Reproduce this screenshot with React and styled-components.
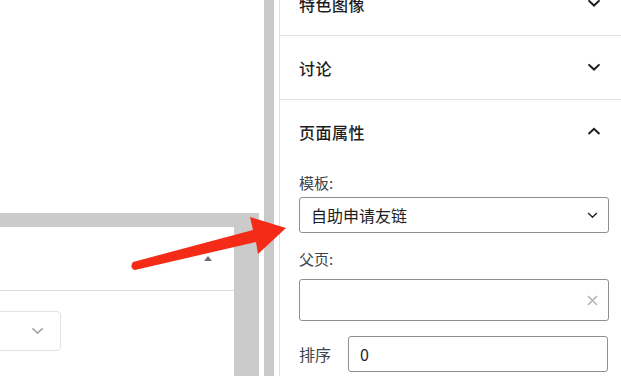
import React from 'react'
import styled, { createGlobalStyle } from 'styled-components'

const Global = createGlobalStyle`
  html, body { margin: 0; padding: 0; background: #fff; }
  body { font-family: "Noto Sans CJK SC", "Noto Sans", sans-serif; }
`;

const Page = styled.div`
  position: relative;
  display: flex;
  width: 621px;
  height: 376px;
  overflow: hidden;
  background: #fff;
`;

// left: the editor area, half covered by grey frame bands
const Editor = styled.div`
  width: 259px;
  display: flex;
  flex-direction: column;
`;
const Canvas = styled.div`
  height: 213px;
  background: #fff;
`;
const Band = styled.div`
  height: 14px;
  background: #cbcbcb;
`;
const LowerRow = styled.div`
  flex: 1;
  display: flex;
`;
const Meta = styled.div`
  width: 234px;
  background: #fff;
`;
const MetaHead = styled.div`
  height: 63px;
  border-bottom: 1px solid #dedede;
  display: flex;
  align-items: center;
  justify-content: flex-end;
  padding-right: 22px;
`;
const Caret = styled.span`
  width: 0;
  height: 0;
  border-left: 4px solid transparent;
  border-right: 4px solid transparent;
  border-bottom: 5px solid #707070;
`;
const MetaBody = styled.div`
  padding-top: 20px;
`;
const GhostSelect = styled.div`
  margin-left: -4px;
  width: 65px;
  height: 40px;
  box-sizing: border-box;
  border: 1px solid #e2e2e2;
  border-radius: 4px;
  display: flex;
  align-items: center;
  justify-content: flex-end;
  padding-right: 16px;
`;
const Frame = styled.div`
  flex: 1;
  background: #cbcbcb;
`;

const Gutter = styled.div`
  width: ${p => p.$w}px;
  background: ${p => p.$grey ? '#c9c9c9' : '#fff'};
`;

// right: document settings sidebar
const Sidebar = styled.aside`
  flex: 1;
  border-left: 1px solid #e0e0e0;
  color: #1e1e1e;
`;
const List = styled.div`
  margin-top: -28px;
`;
const Panel = styled.section`
  border-bottom: ${p => p.$open ? 'none' : '1px solid #e0e0e0'};
`;
const PanelHead = styled.div`
  height: 63px;
  display: flex;
  align-items: center;
  justify-content: space-between;
  padding: 0 20px 0 19px;
  font-size: 16px;
  font-weight: 500;
  letter-spacing: 0.5px;
`;
const PanelBody = styled.div`
  padding: 11px 12px 0 19px;
`;
const Label = styled.div`
  font-size: 15px;
  line-height: 18px;
  color: #3c434a;
  margin-top: ${p => p.$top || 0}px;
`;
const Field = styled.div`
  box-sizing: border-box;
  height: ${p => p.$h}px;
  margin-top: ${p => p.$top || 0}px;
  border: 1px solid #8c8f94;
  border-radius: 3px;
  display: flex;
  align-items: center;
  justify-content: space-between;
  padding: 0 10px 0 11px;
  font-size: 16px;
  color: #1e1e1e;
  flex: ${p => p.$grow ? 1 : 'none'};
`;
const OrderRow = styled.div`
  margin-top: 15px;
  display: flex;
  align-items: center;
  gap: 17px;
  padding-right: 1px;
`;
const OrderLabel = styled.span`
  font-size: 16px;
  color: #3c434a;
`;

const Arrow = styled.svg`
  position: absolute;
  left: 0;
  top: 0;
  pointer-events: none;
`;

const Chevron = ({ up, w = 14, color = '#1e1e1e', sw = 2 }) => (
  <svg width={w} height={w * 0.6} viewBox="0 0 14 8.4">
    <polyline
      points={up ? '1.5,7 7,1.8 12.5,7' : '1.5,1.4 7,6.6 12.5,1.4'}
      fill="none"
      stroke={color}
      strokeWidth={sw}
    />
  </svg>
);

const Clear = () => (
  <svg width="11" height="11" viewBox="0 0 11 11">
    <path d="M1 1 L10 10 M10 1 L1 10" stroke="#b4b4b4" strokeWidth="1.6" />
  </svg>
);

export default function App() {
  return (
    <Page>
      <Global />
      <Editor>
        <Canvas />
        <Band />
        <LowerRow>
          <Meta>
            <MetaHead><Caret /></MetaHead>
            <MetaBody>
              <GhostSelect><Chevron w={13} color="#a8a8a8" sw={1.8} /></GhostSelect>
            </MetaBody>
          </Meta>
          <Frame />
        </LowerRow>
      </Editor>
      <Gutter $w={5} />
      <Gutter $w={10} $grey />
      <Gutter $w={5} />
      <Sidebar>
        <List>
          <Panel>
            <PanelHead>特色图像<Chevron /></PanelHead>
          </Panel>
          <Panel>
            <PanelHead>讨论<Chevron /></PanelHead>
          </Panel>
          <Panel $open>
            <PanelHead>页面属性<Chevron up /></PanelHead>
            <PanelBody>
              <Label>模板:</Label>
              <Field $h={36} $top={5}>
                自助申请友链
                <Chevron w={11} sw={1.8} />
              </Field>
              <Label $top={17}>父页:</Label>
              <Field $h={42} $top={11}>
                <span />
                <Clear />
              </Field>
              <OrderRow>
                <OrderLabel>排序</OrderLabel>
                <Field $h={36} $grow>0</Field>
              </OrderRow>
            </PanelBody>
          </Panel>
        </List>
      </Sidebar>
      <Arrow width="621" height="376" viewBox="0 0 621 376">
        <path
          d="M133 262 L253 230 L250 217 L286 228 L258 254 L256 242 L135 270 Q129 268 133 262 Z"
          fill="#f42b17"
        />
      </Arrow>
    </Page>
  )
}
